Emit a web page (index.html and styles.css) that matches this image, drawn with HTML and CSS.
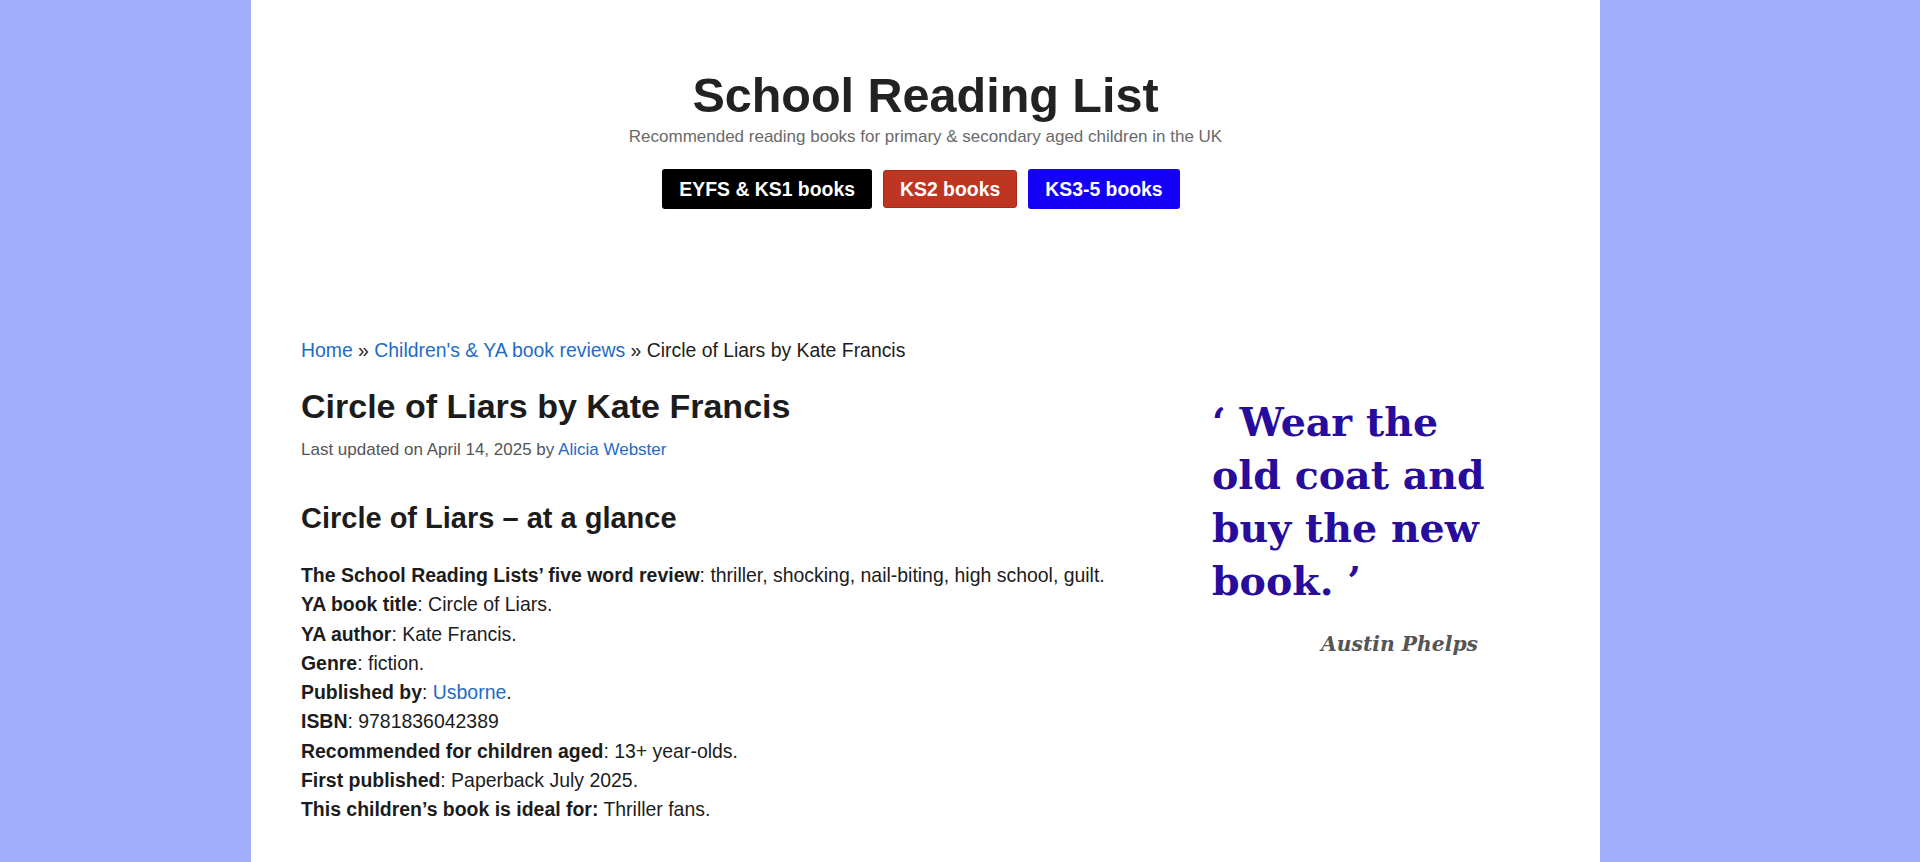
FILE: index.html
```html
<!DOCTYPE html>
<html lang="en">
<head>
<meta charset="utf-8">
<title>Circle of Liars by Kate Francis</title>
<link rel="stylesheet" href="styles.css">
</head>
<body>
<div class="page">
  <header class="site-header">
    <div class="site-title">School Reading List</div>
    <div class="site-desc">Recommended reading books for primary &amp; secondary aged children in the UK</div>
    <nav class="key-nav">
      <a class="btn btn-black" href="#">EYFS &amp; KS1 books</a>
      <a class="btn btn-red" href="#">KS2 books</a>
      <a class="btn btn-blue" href="#">KS3-5 books</a>
    </nav>
  </header>
  <div class="content-wrap">
    <div class="breadcrumb"><a href="#">Home</a> » <a href="#">Children's &amp; YA book reviews</a> » Circle of Liars by Kate Francis</div>
    <div class="columns">
      <main class="main">
        <h1 class="entry-title">Circle of Liars by Kate Francis</h1>
        <p class="entry-meta">Last updated on April 14, 2025 by <a href="#">Alicia Webster</a></p>
        <h2 class="glance">Circle of Liars – at a glance</h2>
        <ul class="facts">
          <li><b>The School Reading Lists’ five word review</b>: thriller, shocking, nail-biting, high school, guilt.</li>
          <li><b>YA book title</b>: Circle of Liars.</li>
          <li><b>YA author</b>: Kate Francis.</li>
          <li><b>Genre</b>: fiction.</li>
          <li><b>Published by</b>: <a href="#">Usborne</a>.</li>
          <li><b>ISBN</b>: 9781836042389</li>
          <li><b>Recommended for children aged</b>: 13+ year-olds.</li>
          <li><b>First published</b>: Paperback July 2025.</li>
          <li><b>This children’s book is ideal for:</b> Thriller fans.</li>
        </ul>
      </main>
      <aside class="sidebar">
        <blockquote class="quote">‘ Wear the old coat and buy the new book. ’</blockquote>
        <div class="quote-author">Austin Phelps</div>
      </aside>
    </div>
  </div>
</div>
</body>
</html>
```
FILE: styles.css
```css
html, body {
  margin: 0;
  padding: 0;
}
body {
  background: #a1aefc;
  font-family: "Liberation Sans", Arial, Helvetica, sans-serif;
  color: #1c1c1c;
  min-height: 862px;
}
a {
  color: #1e6bc6;
  text-decoration: none;
}
.page {
  background: #fff;
  width: 1349px;
  margin-left: 251px;
  min-height: 862px;
}
.site-header {
  padding-top: 66px;
  text-align: center;
}
.site-title {
  font-size: 48.5px;
  font-weight: 700;
  line-height: 58px;
  color: #222;
}
.site-desc {
  font-size: 17px;
  color: #6a6a6a;
  line-height: 21px;
  margin-top: 2px;
}
.key-nav {
  display: flex;
  justify-content: center;
  align-items: center;
  gap: 11px;
  margin-top: 22px;
  margin-left: -9px;
}
.btn {
  display: inline-flex;
  align-items: center;
  height: 40px;
  box-sizing: border-box;
  padding: 0 17px;
  font-size: 19.4px;
  font-weight: 700;
  color: #fff;
  border-radius: 3px;
}
.btn-black { background: #000; }
.btn-red {
  background: #be3521;
  border: 1px solid #a82a18;
  height: 38px;
  padding: 0 16px;
}
.btn-blue { background: #1400f5; }
.content-wrap {
  padding: 128px 50px 0 50px;
}
.breadcrumb {
  font-size: 19.4px;
  line-height: 26px;
}
.columns {
  display: flex;
  margin-top: 23px;
}
.main {
  flex: 1;
}
.entry-title {
  font-size: 34px;
  font-weight: 700;
  line-height: 40px;
  margin: 0;
  color: #1c1c1c;
}
.entry-meta {
  margin: 13px 0 0;
  font-size: 17px;
  line-height: 22px;
  color: #555;
}
.glance {
  font-size: 29px;
  font-weight: 700;
  line-height: 35px;
  margin: 40px 0 0;
}
.facts {
  list-style: none;
  margin: 25px 0 0;
  padding: 0;
  font-size: 19.45px;
  line-height: 29.3px;
}
.sidebar {
  width: 338px;
  padding-top: 10px;
}
.quote {
  margin: 0;
  width: 300px;
  font-family: "DejaVu Serif", Georgia, serif;
  font-weight: 700;
  font-size: 39.5px;
  line-height: 53px;
  color: #280c9c;
}
.quote-author {
  width: 266px;
  text-align: right;
  margin-top: 24px;
  font-family: "DejaVu Serif", Georgia, serif;
  font-style: italic;
  font-weight: 700;
  font-size: 20.3px;
  color: #555;
}
```
